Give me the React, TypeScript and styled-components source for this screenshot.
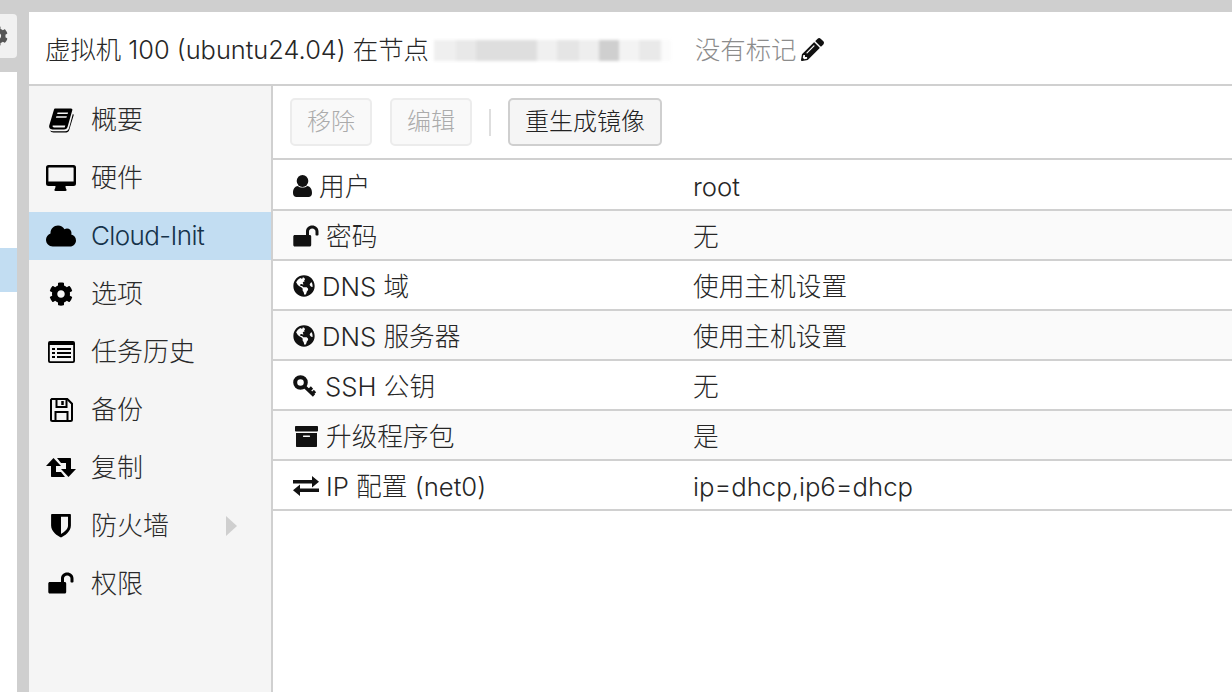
import styled, { createGlobalStyle } from 'styled-components';
import { FaCloud, FaCog, FaGlobeAmericas, FaPencilAlt } from 'react-icons/fa';

const GlobalStyle = createGlobalStyle`
  html, body { margin: 0; padding: 0; height: 100%; overflow: hidden; }
  body {
    font-family: Inter, "Noto Sans CJK SC", sans-serif;
    font-weight: 300;
    line-height: 32px;
    color: #262626;
    background: #cfcfcf;
  }
`;

const Page = styled.div`
  display: flex;
  height: 692px;
  padding-top: 12px;
  box-sizing: border-box;
  gap: 12px;
  overflow: hidden;
`;

const Rail = styled.div`
  width: 17px;
  flex: none;
  display: flex;
  flex-direction: column;
`;

const RailTools = styled.div`
  height: 60px;
  flex: none;
  padding-top: 2px;
  box-sizing: border-box;
`;

const RailButton = styled.div`
  height: 44px;
  background: #f1f1f1;
  border-radius: 0 4px 4px 0;
  display: flex;
  align-items: center;
  overflow: hidden;
  color: #555;

  svg { flex: none; margin-left: -12px; }
`;

const RailTree = styled.div`
  flex: 1;
  background: #fff;
  padding-top: 176px;
`;

const RailSelected = styled.div`
  height: 44px;
  background: #c2ddf2;
`;

const Main = styled.div`
  flex: 1;
  display: flex;
  flex-direction: column;
  background: #fff;
  min-width: 0;
`;

const TitleBar = styled.div`
  height: 74px;
  flex: none;
  display: flex;
  align-items: center;
  padding: 3px 0 0 16px;
  box-sizing: border-box;
  border-bottom: 2px solid #d0d0d0;
  font-size: 25.4px;
`;

const TitleText = styled.span`
  white-space: nowrap;
`;

const Blur = styled.div`
  display: flex;
  width: 242px;
  height: 21px;
  flex: none;
  filter: blur(1.5px);
  margin: 2px 24px 0 0;
`;

const BlurCell = styled.div<{ $w: number; $shade: string }>`
  width: ${(p) => p.$w}px;
  background: ${(p) => p.$shade};
`;

const TagsLabel = styled.span`
  color: #8c8c8c;
  white-space: nowrap;
`;

const TagsPencil = styled.span`
  display: flex;
  margin-left: 4px;
  font-size: 23px;
  color: #111;
`;

const Body = styled.div`
  flex: 1;
  display: flex;
  min-height: 0;
`;

const Side = styled.nav`
  width: 242px;
  flex: none;
  background: #f5f5f5;
  border-right: 2px solid #d0d0d0;
  padding-top: 10px;
`;

const SideItem = styled.div<{ $active?: boolean }>`
  height: 48px;
  margin-bottom: 10px;
  padding: 0 0 1px 16px;
  box-sizing: border-box;
  display: flex;
  align-items: center;
  font-size: 26px;
  letter-spacing: ${(p) => (p.$active ? '-0.6px' : '0')};
  background: ${(p) => (p.$active ? '#c2ddf2' : 'transparent')};
  color: ${(p) => (p.$active ? '#15324a' : '#2a2a2a')};
`;

const SideIcon = styled.span`
  width: 32px;
  height: 32px;
  margin-right: 14px;
  flex: none;
  display: flex;
  align-items: center;
  justify-content: center;
  color: #000;
`;

const Arrow = styled.span`
  margin-left: 57px;
  width: 0;
  height: 0;
  border-left: 11px solid #cfcfcf;
  border-top: 10px solid transparent;
  border-bottom: 10px solid transparent;
`;

const Content = styled.div`
  flex: 1;
  min-width: 0;
  display: flex;
  flex-direction: column;
`;

const Toolbar = styled.div`
  height: 74px;
  flex: none;
  display: flex;
  align-items: center;
  gap: 18px;
  padding-left: 17px;
  box-sizing: border-box;
  border-bottom: 2px solid #d0d0d0;
`;

const ToolButton = styled.button<{ $disabled?: boolean }>`
  height: 48px;
  padding: 0 15px;
  font: inherit;
  font-size: 24px;
  border-radius: 5px;
  background: ${(p) => (p.$disabled ? '#f9f9f9' : '#f5f5f5')};
  border: 2px solid ${(p) => (p.$disabled ? '#ececec' : '#cfcfcf')};
  color: ${(p) => (p.$disabled ? '#ababab' : '#222')};
`;

const ToolSeparator = styled.div`
  width: 2px;
  height: 27px;
  margin: 0 -1px;
  background: #dedede;
`;

const Rows = styled.div`
  padding-top: 1px;
`;

const Row = styled.div<{ $alt?: boolean }>`
  height: 50px;
  padding-top: 4px;
  display: flex;
  align-items: center;
  box-sizing: border-box;
  border-bottom: 2px solid #d0d0d0;
  background: ${(p) => (p.$alt ? '#fafafa' : '#fff')};
  font-size: 25.7px;
`;

const RowName = styled.div`
  width: 420px;
  flex: none;
  padding-left: 20px;
  box-sizing: border-box;
  display: flex;
  align-items: center;
  gap: 7px;
  white-space: nowrap;
`;

const RowIcon = styled.span`
  display: flex;
  margin-top: -2px;
  color: #111;
`;

const RowValue = styled.div`
  white-space: nowrap;
`;

const Book = () => (
  <svg width="26" height="26" viewBox="0 0 26 26" fill="currentColor">
    <path d="M7 1.500h16c1 0 1.600.8 1.300 1.800l-4.600 16.300c-.5 1.800-1.700 2.900-3.700 2.900H4.500C2 22.500.6 20.500 1.300 18.300L6 2.500c.2-.6.500-1 1-1zm2.600 4-.5 1.500h10.500l.5-1.500H9.600zm-1.200 3.800-.5 1.500h10.500l.5-1.500H8.400zM4.700 18.500c-.4 1.200.3 2 1.500 2h10.500l.6-2H4.700z" />
    <path d="M24.800 7l1 .8-4.600 15.300c-.4 1.300-1.500 2.400-3 2.400H5.500c-1.500 0-2.800-.6-3.500-1.900.9.500 1.800.7 2.800.7h12.400c2 0 3.200-1.100 3.800-3z" />
  </svg>
);

const Desktop = () => (
  <svg width="30" height="26" viewBox="0 0 30 26" fill="currentColor">
    <path
      fillRule="evenodd"
      d="M2.500 0h25A2.500 2.500 0 0 1 30 2.500v16a2.500 2.500 0 0 1-2.500 2.500H19.500c0 2 .6 3 1 3.500.3.600 0 1.500-1 1.500h-10c-1 0-1.300-.9-1-1.500.4-.5 1-1.500 1-3.500h-7A2.500 2.500 0 0 1 0 18.500v-16A2.500 2.500 0 0 1 2.500 0zM3 2.500a.6.6 0 0 0-.6.6V16.500h25.200V3.100a.6.6 0 0 0-.6-.6H3z"
    />
  </svg>
);

const ListAlt = () => (
  <svg width="27" height="22" viewBox="0 0 27 22" fill="currentColor">
    <path
      fillRule="evenodd"
      d="M2 0h23a2 2 0 0 1 2 2v18a2 2 0 0 1-2 2H2a2 2 0 0 1-2-2V2a2 2 0 0 1 2-2zm-.2 4v15.700c0 .3.200.5.500.5h22.400c.3 0 .5-.2.500-.5V4H1.800zM4 7h3v2H4V7zm5 0h14v2H9V7zm-5 4h3v2H4v-2zm5 0h14v2H9v-2zm-5 4h3v2H4v-2zm5 0h14v2H9v-2z"
    />
  </svg>
);

const Floppy = () => (
  <svg width="23" height="24" viewBox="0 0 23 24" fill="none" stroke="currentColor" strokeWidth="2">
    <path d="M1.800 1h15.500L22 5.700V21.500a1.500 1.500 0 0 1-1.500 1.500H2.500A1.500 1.500 0 0 1 1 21.500V1.800z" />
    <path d="M6.500 1.500v7.500h10V1.500M5.500 22.500v-8.500h12v8.500" />
    <path d="M12.500 3v4" strokeWidth="2.500" />
  </svg>
);

const Retweet = () => (
  <svg width="30" height="19" viewBox="0 0 30 19" fill="currentColor">
    <path d="M7.500 0L15 8h-5v6h5l4 5H6c-.7 0-1-.3-1-1V8H0z" />
    <path d="M22.500 19L15 11h5V5h-5l-4-5h13c.7 0 1 .3 1 1v10h5z" />
  </svg>
);

const Shield = () => (
  <svg width="22" height="25" viewBox="0 0 22 26" fill="currentColor">
    <path d="M1.500 1h19c.4 0 .8.400.8.800V13c0 6.500-6.700 10.800-10.300 12.500C7.400 23.800.7 19.500.7 13V1.800c0-.4.400-.8.800-.8zM11 4v17.800c3-1.600 7.300-4.900 7.300-8.800V4H11z" />
  </svg>
);

const OpenLock = ({ size }: { size: number }) => (
  <svg width={size} height={size * 0.85} viewBox="0 0 26 22" fill="currentColor">
    <path d="M1.800 10H13V6.500C13 3 15.700.5 19.200.5S25.500 3 25.500 6.500V9.500c0 .6-.5 1-1 1h-1c-.6 0-1-.4-1-1V6.500c0-1.800-1.400-3.100-3.300-3.100S16 4.700 16 6.500V10h.700c.9 0 1.500.7 1.500 1.500v8.500c0 .9-.6 1.500-1.500 1.500H1.800C.9 21.500.3 20.900.3 20v-8.500C.3 10.700.9 10 1.800 10z" />
  </svg>
);

const User = () => (
  <svg width="19" height="22" viewBox="0 0 19 22" fill="currentColor">
    <ellipse cx="9.500" cy="6" rx="5.800" ry="6" />
    <path d="M5 11c1.500 2 7.500 2 9 0 3 .3 5 2.500 5 7 0 2.500-1.500 4-3.500 4h-12C1.500 22 0 20.500 0 18c0-4.500 2-6.700 5-7z" />
  </svg>
);

const Key = () => (
  <svg width="25" height="22" viewBox="0 0 25 22" fill="none" stroke="currentColor">
    <circle cx="7.500" cy="7.500" r="5.300" strokeWidth="4" />
    <path d="M11.500 11.500l9.500 9M16 15.500l3-3M19.500 18.500l2.500-2.500" strokeWidth="3.200" />
  </svg>
);

const Archive = () => (
  <svg width="26" height="21" viewBox="-2 0 26 21" fill="currentColor">
    <path
      fillRule="evenodd"
      d="M.8 0h21.400c.4 0 .8.300.8.800v4c0 .4-.4.700-.8.700H.8C.4 5.500 0 5.200 0 4.800v-4C0 .3.400 0 .8 0zM1 7h21v13c0 .6-.4 1-1 1H2c-.6 0-1-.4-1-1V7zm7.500 2.500c-.4 0-.6.300-.6.700s.2.800.6.800h6c.4 0 .6-.4.600-.8s-.2-.7-.6-.7h-6z"
    />
  </svg>
);

const Exchange = () => (
  <svg width="26" height="20" viewBox="0 0 26 20" fill="currentColor">
    <path d="M19 0l7 5.700-7 5.700V7.500H0V4h19zM7 8.600v3.900h19V16H7v4l-7-5.700z" />
  </svg>
);

const sideItems = [
  { label: '概要', icon: <Book /> },
  { label: '硬件', icon: <Desktop /> },
  { label: 'Cloud-Init', icon: <FaCloud size={30} />, active: true },
  { label: '选项', icon: <FaCog size={24} /> },
  { label: '任务历史', icon: <ListAlt /> },
  { label: '备份', icon: <Floppy /> },
  { label: '复制', icon: <Retweet /> },
  { label: '防火墙', icon: <Shield />, arrow: true },
  { label: '权限', icon: <OpenLock size={26} /> },
];

const rows = [
  { icon: <User />, name: '用户', value: 'root' },
  { icon: <OpenLock size={26} />, name: '密码', value: '无' },
  { icon: <FaGlobeAmericas size={22} />, name: 'DNS 域', value: '使用主机设置' },
  { icon: <FaGlobeAmericas size={22} />, name: 'DNS 服务器', value: '使用主机设置' },
  { icon: <Key />, name: 'SSH 公钥', value: '无' },
  { icon: <Archive />, name: '升级程序包', value: '是' },
  { icon: <Exchange />, name: 'IP 配置 (net0)', value: 'ip=dhcp,ip6=dhcp' },
];

const blurCells: [number, string][] = [
  [5, '#ffffff'],
  [22, '#efefef'],
  [20, '#e8e8e8'],
  [61, '#dedede'],
  [20, '#f0f0f0'],
  [22, '#e5e5e5'],
  [20, '#eeeeee'],
  [20, '#cfcfcf'],
  [20, '#f3f3f3'],
  [22, '#e9e9e9'],
  [10, '#fbfbfb'],
];

export default function App() {
  return (
    <>
      <GlobalStyle />
      <Page>
        <Rail>
          <RailTools>
            <RailButton>
              <FaCog size={20} />
            </RailButton>
          </RailTools>
          <RailTree>
            <RailSelected />
          </RailTree>
        </Rail>
        <Main>
          <TitleBar>
            <TitleText>虚拟机 100 (ubuntu24.04) 在节点</TitleText>
            <Blur>
              {blurCells.map(([w, shade], i) => (
                <BlurCell key={i} $w={w} $shade={shade} />
              ))}
            </Blur>
            <TagsLabel>没有标记</TagsLabel>
            <TagsPencil>
              <FaPencilAlt />
            </TagsPencil>
          </TitleBar>
          <Body>
            <Side>
              {sideItems.map((item) => (
                <SideItem key={item.label} $active={item.active}>
                  <SideIcon>{item.icon}</SideIcon>
                  {item.label}
                  {item.arrow && <Arrow />}
                </SideItem>
              ))}
            </Side>
            <Content>
              <Toolbar>
                <ToolButton $disabled>移除</ToolButton>
                <ToolButton $disabled>编辑</ToolButton>
                <ToolSeparator />
                <ToolButton>重生成镜像</ToolButton>
              </Toolbar>
              <Rows>
                {rows.map((row, i) => (
                  <Row key={row.name} $alt={i % 2 === 1}>
                    <RowName>
                      <RowIcon>{row.icon}</RowIcon>
                      {row.name}
                    </RowName>
                    <RowValue>{row.value}</RowValue>
                  </Row>
                ))}
              </Rows>
            </Content>
          </Body>
        </Main>
      </Page>
    </>
  );
}
